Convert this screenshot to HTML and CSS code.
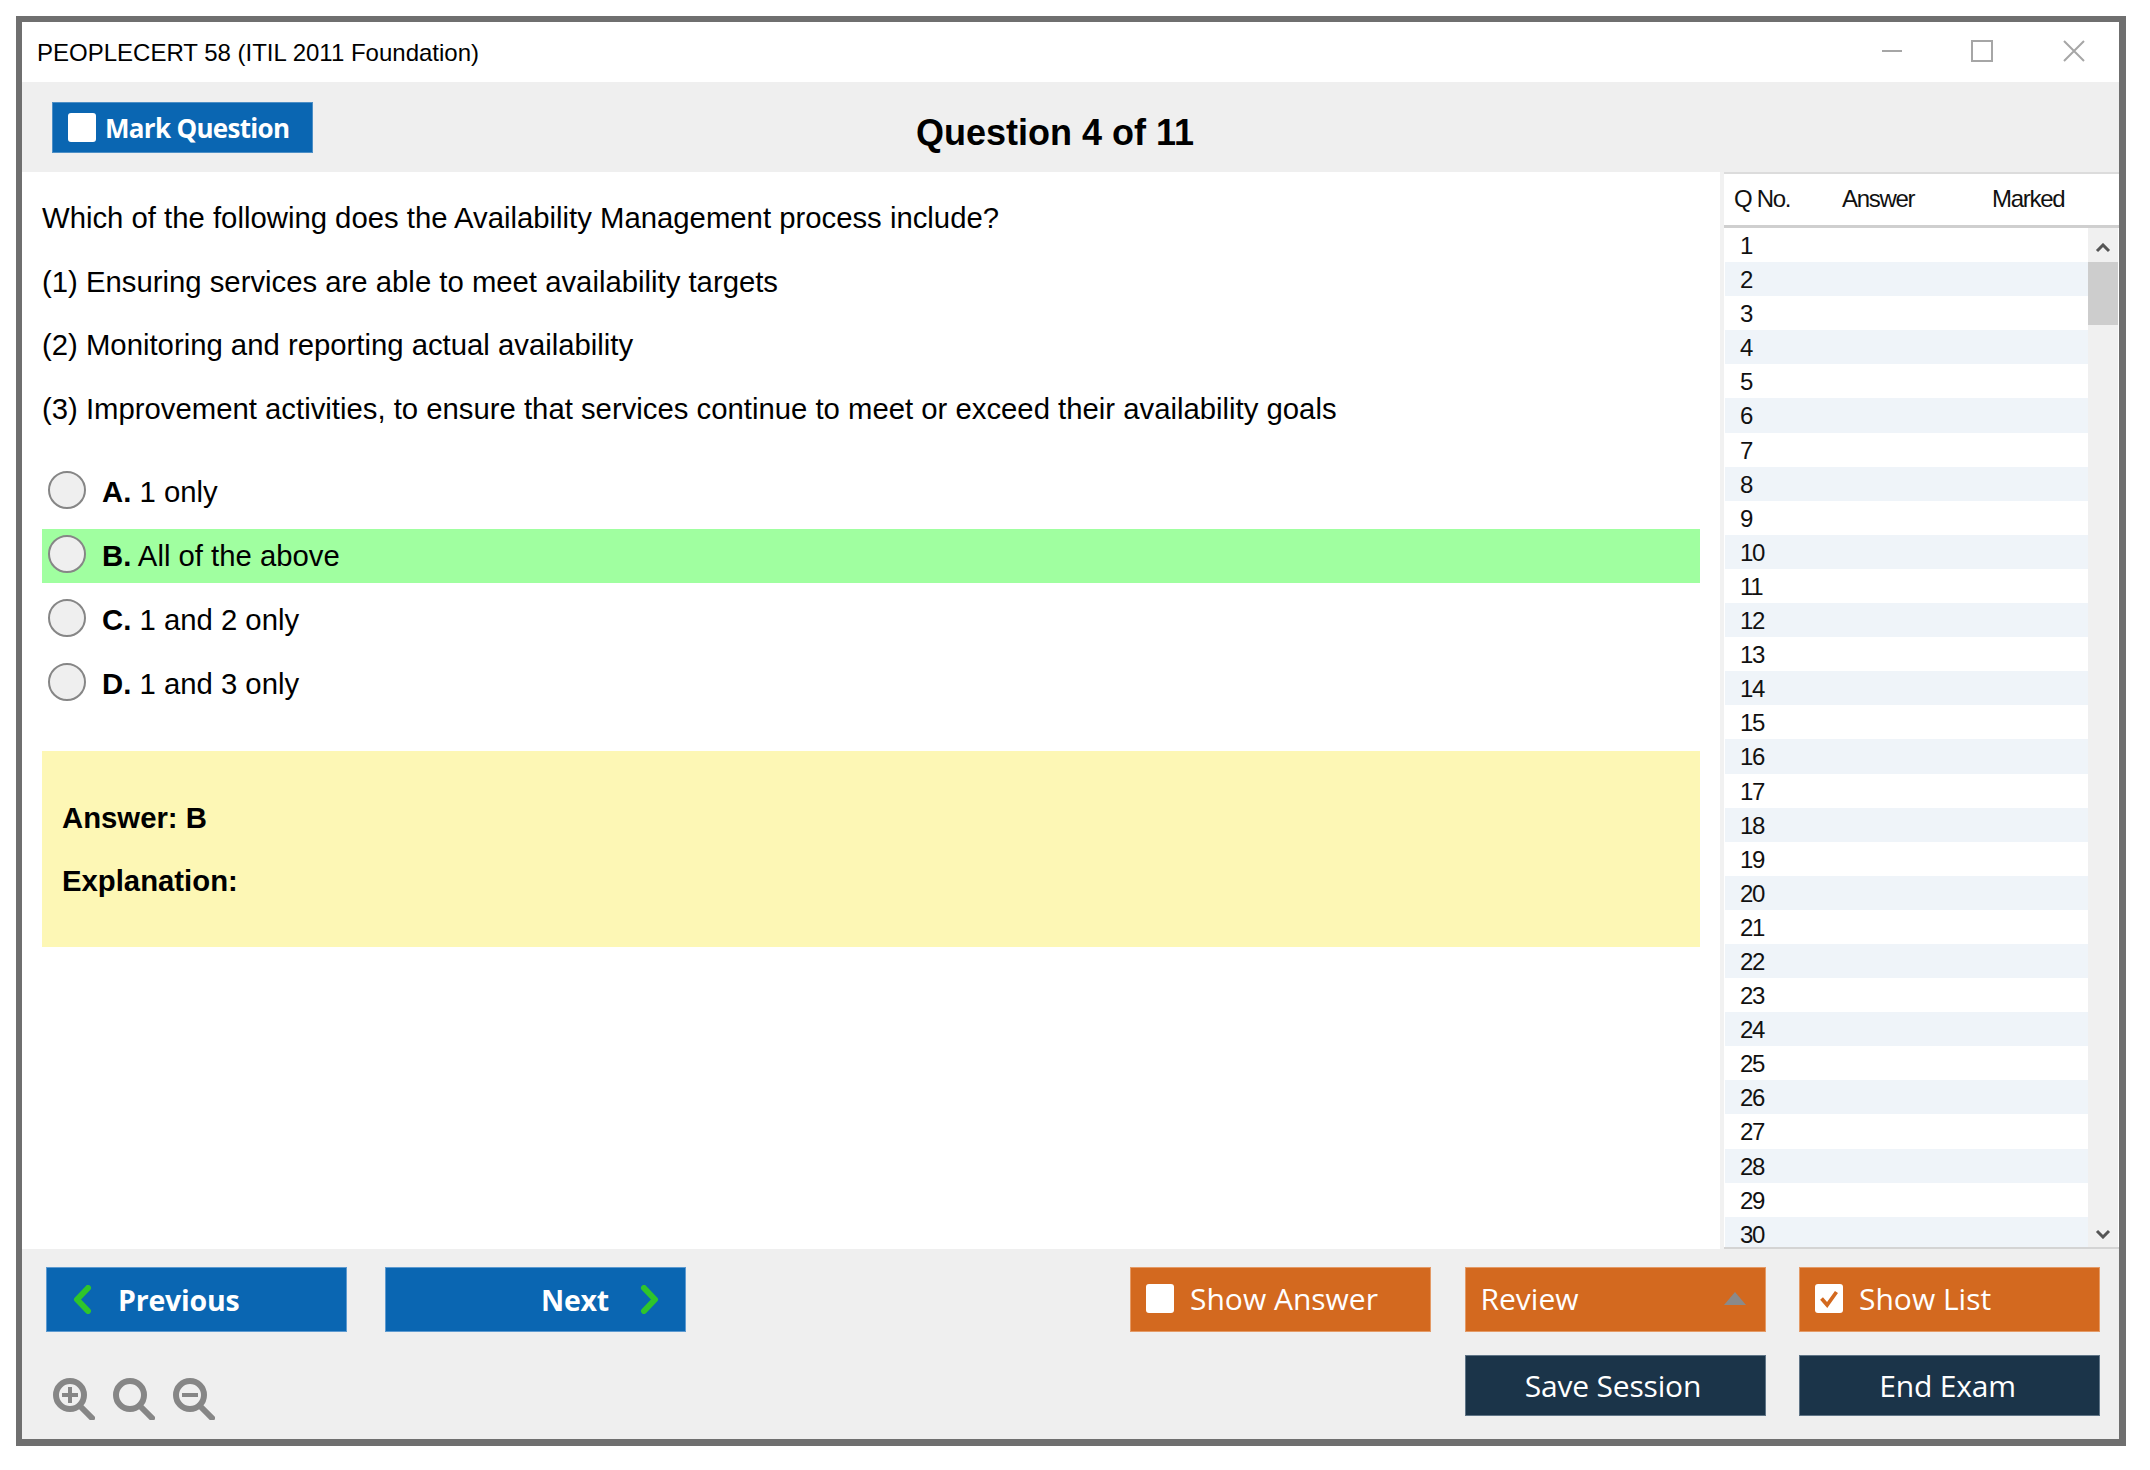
FILE: index.html
```html
<!DOCTYPE html>
<html lang="en">
<head>
<meta charset="utf-8">
<title>PEOPLECERT 58</title>
<link rel="stylesheet" href="styles.css">
</head>
<body>
<div class="window">
  <header class="titlebar">
    <span class="app-title">PEOPLECERT 58 (ITIL 2011 Foundation)</span>
    <div class="win-controls">
      <svg class="win-icon min" viewBox="0 0 22 22"><path d="M1 11H21"/></svg>
      <svg class="win-icon max" viewBox="0 0 22 22"><rect x="1" y="1" width="20" height="20"/></svg>
      <svg class="win-icon close" viewBox="0 0 22 22"><path d="M1 1L21 21M21 1L1 21"/></svg>
    </div>
  </header>
  <div class="head">
    <div class="mark-btn"><span class="check"></span><span>Mark Question</span></div>
    <div class="q-title">Question 4 of 11</div>
  </div>
  <div class="body">
    <main class="content">
      <p class="q-line">Which of the following does the Availability Management process include?</p>
      <p class="q-line">(1) Ensuring services are able to meet availability targets</p>
      <p class="q-line">(2) Monitoring and reporting actual availability</p>
      <p class="q-line">(3) Improvement activities, to ensure that services continue to meet or exceed their availability goals</p>
      <div class="options">
        <div class="option"><span class="radio"></span><span><b>A.</b> 1 only</span></div>
        <div class="option correct"><span class="radio"></span><span><b>B.</b> All of the above</span></div>
        <div class="option"><span class="radio"></span><span><b>C.</b> 1 and 2 only</span></div>
        <div class="option"><span class="radio"></span><span><b>D.</b> 1 and 3 only</span></div>
      </div>
      <div class="answer">
        <div class="answer-line">Answer: B</div>
        <div class="answer-line">Explanation:</div>
      </div>
    </main>
    <aside class="panel">
      <div class="panel-head"><span class="col-q">Q No.</span><span class="col-a">Answer</span><span class="col-m">Marked</span></div>
      <div class="panel-body">
        <div class="rows">
          <div class="row">1</div><div class="row">2</div><div class="row">3</div><div class="row">4</div><div class="row">5</div>
          <div class="row">6</div><div class="row">7</div><div class="row">8</div><div class="row">9</div><div class="row">10</div>
          <div class="row">11</div><div class="row">12</div><div class="row">13</div><div class="row">14</div><div class="row">15</div>
          <div class="row">16</div><div class="row">17</div><div class="row">18</div><div class="row">19</div><div class="row">20</div>
          <div class="row">21</div><div class="row">22</div><div class="row">23</div><div class="row">24</div><div class="row">25</div>
          <div class="row">26</div><div class="row">27</div><div class="row">28</div><div class="row">29</div><div class="row">30</div>
        </div>
        <div class="scrollbar">
          <svg class="arrow" viewBox="0 0 16 10"><path d="M2 8L8 2L14 8"/></svg>
          <div class="thumb"></div>
          <div class="track"></div>
          <svg class="arrow" viewBox="0 0 16 10"><path d="M2 2L8 8L14 2"/></svg>
        </div>
      </div>
    </aside>
  </div>
  <footer class="footer">
    <div class="left-tools">
      <div class="nav">
        <div class="btn blue prev">
          <svg class="chev" viewBox="0 0 19 29"><path d="M15 3L4 14.5L15 26"/></svg>
          <span>Previous</span>
        </div>
        <div class="btn blue next">
          <span>Next</span>
          <svg class="chev" viewBox="0 0 19 29"><path d="M4 3L15 14.5L4 26"/></svg>
        </div>
      </div>
      <div class="zooms">
        <svg class="zoom-icon" viewBox="0 0 42 42"><circle cx="17" cy="17" r="14"/><path class="handle" d="M27 28L39 40"/><path class="sign" d="M17 9V25M9 17H25"/></svg>
        <svg class="zoom-icon" viewBox="0 0 42 42"><circle cx="17" cy="17" r="14"/><path class="handle" d="M27 28L39 40"/></svg>
        <svg class="zoom-icon" viewBox="0 0 42 42"><circle cx="17" cy="17" r="14"/><path class="handle" d="M27 28L39 40"/><path class="sign" d="M9 17H25"/></svg>
      </div>
    </div>
    <div class="actions">
      <div class="btn orange"><span class="check"></span><span>Show Answer</span></div>
      <div class="btn orange review"><span>Review</span><span class="tri"></span></div>
      <div class="btn orange"><span class="check"><svg viewBox="0 0 30 30" class="tick"><path d="M7 15L13 22L23 8"/></svg></span><span>Show List</span></div>
      <div class="btn navy session">Save Session</div>
      <div class="btn navy">End Exam</div>
    </div>
  </footer>
</div>
</body>
</html>
```

FILE: styles.css
```css
* { box-sizing: border-box; }
html, body { margin: 0; padding: 0; background: #fff; }
body { width: 2150px; height: 1470px; font-family: "Liberation Sans", Arial, sans-serif; color: #000; overflow: hidden; }

.window {
  margin: 16px 0 0 16px;
  width: 2110px;
  height: 1430px;
  border: 6px solid #6f6f6f;
  border-right-width: 7px;
  border-bottom-width: 7px;
  display: flex;
  flex-direction: column;
  background: #fff;
}

.titlebar { height: 60px; flex: none; display: flex; align-items: center; justify-content: space-between; padding: 2px 34px 0 15px; }
.app-title { font-size: 24px; }
.win-controls { display: flex; gap: 70px; margin-top: -4px; }
.win-icon { width: 22px; height: 22px; fill: none; stroke: #a6a6a6; stroke-width: 2; }
.win-icon.min { margin-right: -1px; transform: translateX(1px); }

.head { height: 90px; flex: none; background: #efefef; display: flex; padding: 20px 0 0 30px; }
.mark-btn {
  width: 261px; height: 51px; background: #0a66b2; color: #fff; display: flex; align-items: center; gap: 9px;
  padding-left: 15px; font-family: "Open Sans", sans-serif; font-weight: 700; font-size: 26px; letter-spacing: -0.7px;
  border: 1px solid #4d8fc6;
}
.check { width: 28px; height: 29px; background: #fff; border-radius: 3px; flex: none; display: block; }
.q-title { margin: 9px 0 0 603px; font-size: 36px; font-weight: 700; line-height: 44px; }

.body { flex: 1; min-height: 0; display: flex; }
.content { width: 1698px; flex: none; padding: 28px 20px 0; font-size: 29.3px; }
.q-line { margin: 0 0 27.5px; line-height: 36px; }
.options { margin-top: 38px; display: flex; flex-direction: column; gap: 10px; }
.option { height: 54px; display: flex; align-items: center; gap: 16px; padding-left: 6px; }
.option.correct { background: #a0ffa0; }
.radio { width: 38px; height: 38px; border-radius: 50%; border: 2px solid #868686; background: #efefef; flex: none; margin-bottom: 3px; }
.answer { margin-top: 40px; height: 196px; background: #fdf7b5; padding: 49px 20px 0; font-weight: 700; }
.answer-line { line-height: 36px; margin-bottom: 27px; }

.panel { flex: 1; min-width: 0; border-left: 4px solid #f1f1f1; display: flex; flex-direction: column; font-size: 24px; letter-spacing: -1.3px; color: #111; }
.panel-head { height: 56px; flex: none; border-top: 2px solid #dcdcdc; border-bottom: 3px solid #cfcfcf; display: flex; align-items: center; padding: 0 0 2px 10px; }
.col-q { width: 108px; }
.col-a { width: 150px; }
.panel-body { flex: 1; min-height: 0; display: flex; border-bottom: 2px solid #d4d4d4; }
.rows { width: 364px; flex: none; overflow: hidden; padding-left: 1px; }
.row { height: 34.1px; line-height: 36px; padding-left: 15px; }
.row:nth-child(even) { background: #eff4f9; }
.scrollbar { width: 30px; flex: none; background: #f0f0f0; display: flex; flex-direction: column; align-items: center; }
.arrow { width: 16px; height: 10px; margin: 15px 0 9px; fill: none; stroke: #555; stroke-width: 3; flex: none; }
.arrow:last-child { margin: 9px 0 8px; }
.thumb { width: 30px; height: 63px; background: #cdcdcd; flex: none; }
.track { flex: 1; }

.footer { height: 190px; flex: none; background: #efefef; display: flex; justify-content: space-between; padding: 18px 19px 0 24px; }
.left-tools { display: flex; flex-direction: column; }
.nav { display: flex; gap: 38px; }
.btn { height: 65px; display: flex; align-items: center; color: #fff; font-family: "Open Sans", sans-serif; font-size: 30px; }
.blue { width: 301px; background: #0a66b2; border: 1px solid #5d9ad0; font-weight: 700; font-size: 28.5px; letter-spacing: -0.2px; }
.prev { padding-left: 26px; gap: 26px; }
.next { justify-content: flex-end; padding-right: 26px; gap: 31px; }
.chev { width: 19px; height: 29px; fill: none; stroke: #2fc52b; stroke-width: 6; stroke-linecap: round; stroke-linejoin: round; flex: none; }
.zooms { display: flex; gap: 18px; margin: 46px 0 0 7px; }
.zoom-icon { width: 42px; height: 42px; fill: none; stroke: #868686; stroke-width: 6; flex: none; }
.zoom-icon .handle { stroke-width: 6; stroke-linecap: round; }
.zoom-icon .sign { stroke-width: 4; }

.actions { display: grid; grid-template-columns: 301px 301px 301px; column-gap: 33.5px; row-gap: 23px; grid-template-rows: 65px 61px; }
.orange { background: #d3691f; border: 1px solid #e49a66; padding: 0 0 2px 15px; gap: 16px; letter-spacing: 0; }
.review { padding: 0 19px 2px 15px; justify-content: space-between; }
.tri { width: 0; height: 0; border-left: 11px solid transparent; border-right: 11px solid transparent; border-bottom: 13px solid #8a8a8a; }
.tick { width: 28px; height: 29px; fill: none; stroke: #d3691f; stroke-width: 4; display: block; }
.navy { background: #1b3449; border: 1px solid #5f7486; justify-content: center; height: 61px; letter-spacing: -0.2px; padding-right: 4px; }
.session { grid-column: 2; }
```
